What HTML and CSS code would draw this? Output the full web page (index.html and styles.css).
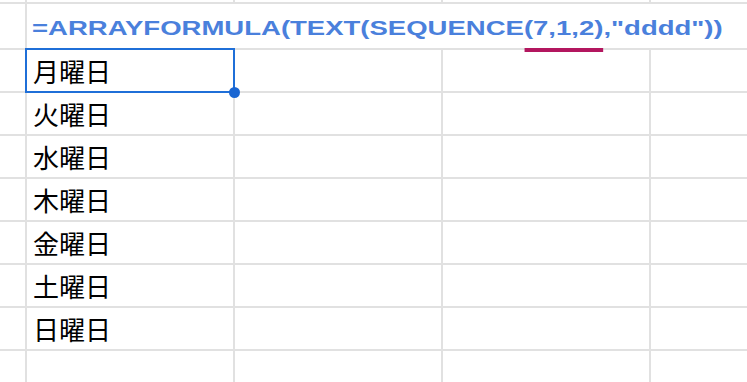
FILE: index.html
```html
<!DOCTYPE html>
<html lang="ja">
<head>
<meta charset="utf-8">
<title>Sheet</title>
<link rel="stylesheet" href="styles.css">
</head>
<body>
<div class="sheet">
  <div class="cell"></div><div class="cell"></div><div class="cell"></div><div class="cell"></div><div class="cell"></div>

  <div class="cell"></div>
  <div class="cell formula"><span class="ftext">=ARRAYFORMULA(TEXT(SEQUENCE<span class="hl">(7,1,2)</span>,"dddd"))</span></div>

  <div class="cell"></div><div class="cell jp selected">月曜日<span class="handle"></span></div><div class="cell"></div><div class="cell"></div><div class="cell"></div>
  <div class="cell"></div><div class="cell jp">火曜日</div><div class="cell"></div><div class="cell"></div><div class="cell"></div>
  <div class="cell"></div><div class="cell jp">水曜日</div><div class="cell"></div><div class="cell"></div><div class="cell"></div>
  <div class="cell"></div><div class="cell jp">木曜日</div><div class="cell"></div><div class="cell"></div><div class="cell"></div>
  <div class="cell"></div><div class="cell jp">金曜日</div><div class="cell"></div><div class="cell"></div><div class="cell"></div>
  <div class="cell"></div><div class="cell jp">土曜日</div><div class="cell"></div><div class="cell"></div><div class="cell"></div>
  <div class="cell"></div><div class="cell jp">日曜日</div><div class="cell"></div><div class="cell"></div><div class="cell"></div>
  <div class="cell"></div><div class="cell"></div><div class="cell"></div><div class="cell"></div><div class="cell"></div>
</div>
</body>
</html>
```

FILE: styles.css
```css
html, body {
  margin: 0;
  padding: 0;
  background: #ffffff;
  overflow: hidden;
}

.sheet {
  display: grid;
  grid-template-columns: 25px 206px 206px 206px 1fr;
  grid-template-rows: 2px 44px repeat(7, 41px) 40px;
  gap: 2px;
  background: #e1e1e1;
  width: 747px;
  height: 382px;
  overflow: hidden;
}

.cell {
  background: #ffffff;
  position: relative;
}

.formula {
  grid-column: 2 / -1;
  z-index: 2;
  font-family: "Liberation Sans", Arial, sans-serif;
  font-weight: bold;
  font-size: 21px;
  color: #4a80dc;
  padding-left: 5px;
  padding-top: 3px;
  line-height: 42px;
  white-space: nowrap;
  box-sizing: border-box;
}

.ftext {
  display: inline-block;
  transform: scaleX(1.31);
  transform-origin: left center;
}

.hl {
  position: relative;
}

.hl::after {
  content: "";
  position: absolute;
  left: 0;
  right: 0;
  top: 100%;
  margin-top: 9px;
  height: 4px;
  background: #b3175f;
}

.jp {
  font-family: "Noto Sans CJK JP", sans-serif;
  font-size: 26px;
  color: #000000;
  display: flex;
  align-items: center;
  padding-left: 6px;
}

.selected {
  outline: 2px solid #1f6fd8;
  outline-offset: 0px;
  z-index: 1;
}

.handle {
  position: absolute;
  right: -7px;
  bottom: -7px;
  width: 11px;
  height: 11px;
  border-radius: 50%;
  background: #1a66d2;
}
```
